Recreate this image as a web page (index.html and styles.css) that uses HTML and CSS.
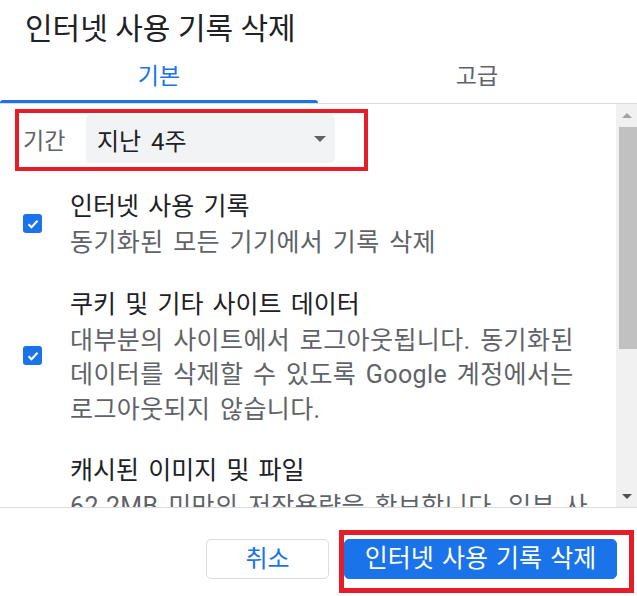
FILE: index.html
```html
<!DOCTYPE html>
<html lang="ko">
<head>
<meta charset="utf-8">
<link rel="stylesheet" href="styles.css">
</head>
<body>
<div class="dialog">
  <h1 class="title">인터넷 사용 기록 삭제</h1>
  <div class="tabs">
    <div class="tab active">기본</div>
    <div class="tab">고급</div>
  </div>
  <div class="body">
    <div class="content">
      <div class="period">
        <span class="period-label">기간</span>
        <div class="select">
          <span>지난 4주</span>
          <svg class="caret" width="12" height="6" viewBox="0 0 12 6"><path d="M0 0h12L6 6z" fill="#5f6368"/></svg>
        </div>
      </div>
      <div class="item">
        <div class="check"><svg width="14" height="14" viewBox="0 0 14 14"><path d="M2.5 7.2l3 3 6-6.4" fill="none" stroke="#fff" stroke-width="2"/></svg></div>
        <div class="item-text">
          <div class="item-title">인터넷 사용 기록</div>
          <div class="item-desc">동기화된 모든 기기에서 기록 삭제</div>
        </div>
      </div>
      <div class="item">
        <div class="check"><svg width="14" height="14" viewBox="0 0 14 14"><path d="M2.5 7.2l3 3 6-6.4" fill="none" stroke="#fff" stroke-width="2"/></svg></div>
        <div class="item-text">
          <div class="item-title">쿠키 및 기타 사이트 데이터</div>
          <div class="item-desc">대부분의 사이트에서 로그아웃됩니다. 동기화된 데이터를 삭제할 수 있도록 Google 계정에서는 로그아웃되지 않습니다.</div>
        </div>
      </div>
      <div class="item">
        <div class="check"><svg width="14" height="14" viewBox="0 0 14 14"><path d="M2.5 7.2l3 3 6-6.4" fill="none" stroke="#fff" stroke-width="2"/></svg></div>
        <div class="item-text">
          <div class="item-title">캐시된 이미지 및 파일</div>
          <div class="item-desc">62.2MB 미만의 저장용량을 확보합니다. 일부 사이트는 다음에 방문할 때 더 느리게 로드될 수 있습니다.</div>
        </div>
      </div>
    </div>
    <div class="scrollbar">
      <div class="sb-btn"><span class="sb-arrow up"></span></div>
      <div class="sb-track"><div class="sb-thumb"></div></div>
      <div class="sb-btn"><span class="sb-arrow down"></span></div>
    </div>
  </div>
  <div class="footer">
    <button class="btn cancel">취소</button>
    <button class="btn primary">인터넷 사용 기록 삭제</button>
  </div>
  <div class="highlight hl-period"></div>
  <div class="highlight hl-button"></div>
</div>
</body>
</html>
```
FILE: styles.css
```css
* { box-sizing: border-box; }
html, body { margin: 0; padding: 0; background: #fff; }
body {
  font-family: Roboto, "Noto Sans CJK KR", sans-serif;
  color: #202124;
  width: 637px;
  height: 596px;
  overflow: hidden;
}
.dialog { position: relative; width: 637px; height: 596px; }
.title {
  margin: 0;
  padding: 11px 0 0 25px;
  height: 47px;
  font-size: 30px;
  line-height: 36px;
  font-weight: 400;
  color: #202124;
}
.tabs {
  display: flex;
  height: 57px;
  border-bottom: 1px solid #dadce0;
}
.tab {
  flex: 0 0 318px;
  display: flex;
  align-items: center;
  justify-content: center;
  font-size: 23px;
  color: #5f6368;
  position: relative;
  padding-bottom: 2px;
}
.tab.active { color: #1a73e8; }
.tab.active::after {
  content: "";
  position: absolute;
  left: 0; right: 0; bottom: 0;
  height: 3px;
  background: #1a73e8;
  border-radius: 3px 3px 0 0;
}
.body {
  display: flex;
  height: 404px;
  border-bottom: 1px solid #dadce0;
}
.content {
  flex: 1;
  overflow: hidden;
  padding-top: 11px;
}
.period {
  display: flex;
  align-items: center;
  padding-left: 23px;
  height: 48px;
}
.period-label {
  width: 63px;
  font-size: 23px;
  color: #5f6368;
}
.select {
  width: 249px;
  height: 48px;
  background: #f1f3f4;
  border-radius: 5px;
  display: flex;
  align-items: center;
  justify-content: space-between;
  padding: 0 9px 0 11px;
  font-size: 24px;
  word-spacing: 4px;
  color: #202124;
}
.item {
  display: flex;
  align-items: center;
  padding-left: 23px;
  margin-top: 24px;
}
.check {
  flex: 0 0 19px;
  width: 19px;
  height: 19px;
  background: #1a73e8;
  border-radius: 3px;
  display: flex;
  align-items: center;
  justify-content: center;
  margin-right: 28px;
}
.item-text { flex: 1; padding-right: 24px; }
.item-title {
  font-size: 25px;
  line-height: 39px;
  word-spacing: 3px;
  color: #202124;
}
.item-desc {
  font-size: 25px;
  line-height: 34.5px;
  word-spacing: 3px;
  letter-spacing: 0.4px;
  color: #5f6368;
}
.scrollbar {
  flex: 0 0 21px;
  background: #f1f1f1;
  display: flex;
  flex-direction: column;
}
.sb-btn {
  height: 22px;
  display: flex;
  align-items: center;
  justify-content: center;
}
.sb-track { flex: 1; padding-left: 3px; }
.sb-thumb { height: 222px; background: #c1c1c1; margin-top: 1px; }
.sb-arrow {
  width: 0; height: 0;
  border-left: 5px solid transparent;
  border-right: 5px solid transparent;
}
.sb-arrow.up { border-bottom: 5px solid #a3a3a3; }
.sb-arrow.down { border-top: 5px solid #505050; }
.footer {
  display: flex;
  justify-content: flex-end;
  align-items: flex-start;
  padding: 31px 20px 0 0;
  gap: 15px;
}
.btn {
  font-family: Roboto, "Noto Sans CJK KR", sans-serif;
  height: 40px;
  border-radius: 5px;
  font-size: 24px;
  padding: 0;
  line-height: 38px;
  cursor: pointer;
}
.btn.cancel {
  width: 123px;
  background: #fff;
  border: 1px solid #dadce0;
  color: #1a73e8;
}
.btn.primary {
  width: 273px;
  background: #1a73e8;
  border: 1px solid #1a73e8;
  color: #fff;
  font-size: 25px;
  word-spacing: 2px;
}
.highlight {
  position: absolute;
  border: 4px solid #e51d28;
  pointer-events: none;
}
.hl-period { left: 15px; top: 109px; width: 353px; height: 62px; }
.hl-button { left: 339px; top: 530px; width: 295px; height: 63px; border-width: 5px; }
```
